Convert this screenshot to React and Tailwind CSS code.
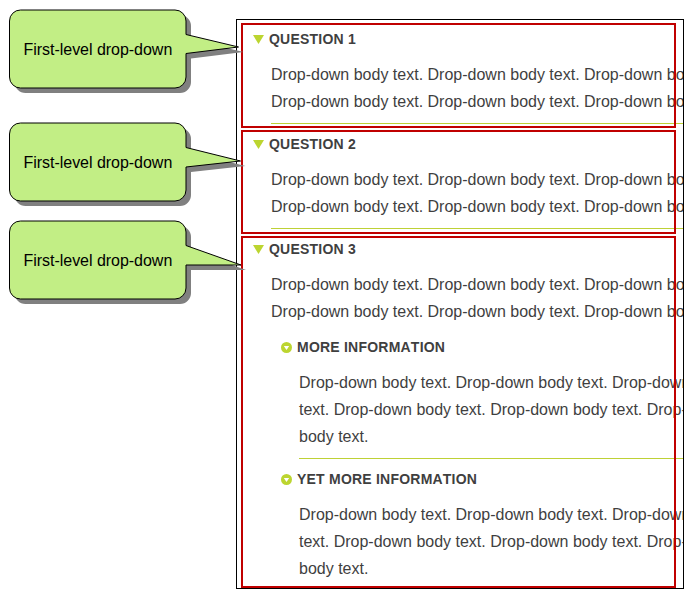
const SENTENCE = "Drop-down body text. ";

function Triangle() {
  return (
    <svg className="mr-[5px] h-[9px] w-[11px] shrink-0" viewBox="0 0 11 9">
      <path d="M0 0H11L5.5 9Z" fill="#bcd530" />
    </svg>
  );
}

function CircleArrow() {
  return (
    <svg className="mr-[5px] size-[11px] shrink-0" viewBox="0 0 11 11">
      <circle cx="5.5" cy="5.5" r="5.5" fill="#bcd530" />
      <path d="M2.8 4H8.2L5.5 8Z" fill="#fff" />
    </svg>
  );
}

function Heading({ icon, children }) {
  return (
    <h3 className="flex h-[22px] items-center text-[14px] font-bold tracking-[0.22px] whitespace-nowrap text-[#3f3f3f] [font-kerning:none]">
      {icon}
      <span>{children}</span>
    </h3>
  );
}

function Body({ lines }) {
  return (
    <div className="mt-[11px] text-[16px] leading-[27px] whitespace-nowrap text-[#3f3f3f]">
      {lines.map((line, i) => (
        <p key={i}>{line}</p>
      ))}
    </div>
  );
}

function Rule() {
  return <div className="mt-2 h-px bg-[#bed136]" />;
}

function Outline() {
  return <div className="pointer-events-none absolute inset-0 border-2 border-[#c00000]" />;
}

const wide = [SENTENCE.repeat(3), SENTENCE.repeat(3)];
const nested = [SENTENCE.repeat(3), "text. " + SENTENCE.repeat(3), "body text."];

function Callout({ path, className }) {
  return (
    <div className={`relative flex h-[78px] w-[176px] items-center ${className}`}>
      <svg className="absolute top-0 left-0 h-[90px] w-[245px] overflow-visible" viewBox="0 0 245 90">
        <path d={path} fill="#808080" transform="translate(5 5)" />
        <path d={path} fill="#c2ee85" stroke="#000" strokeWidth="1" />
      </svg>
      <span className="relative mt-0.5 ml-[14.5px] text-[16px] tracking-[-0.03px] whitespace-nowrap text-black">First-level drop-down</span>
    </div>
  );
}

const bubble = (top, tipX, tipY, bottom) =>
  `M11.5 0H166A11 11 0 0 1 177 11V${top}L${tipX} ${tipY}L177 ${bottom}V67A11 11 0 0 1 166 78H11.5A11 11 0 0 1 .5 67V11A11 11 0 0 1 11.5 0Z`;

export default function App() {
  return (
    <main className="flex h-[589px] w-[684px] overflow-hidden bg-white font-['Liberation_Sans',Arial,sans-serif]">
      <aside className="relative z-10 w-[236px] shrink-0 pt-[10px] pl-[9px]">
        <Callout path={bubble(24.5, 229.5, 37, 43.5)} className="" />
        <Callout path={bubble(24.5, 231.5, 38, 44)} className="mt-[35px]" />
        <Callout path={bubble(24.5, 232, 44, 44)} className="mt-5" />
      </aside>
      <div className="mt-[19px] h-[570px] w-[448px] shrink-0 overflow-hidden border border-black pt-[3px] pl-1">
        <section className="relative h-[105px] w-[435px] pt-[5px] pl-3">
          <Heading icon={<Triangle />}>QUESTION 1</Heading>
          <div className="ml-[18px] w-[420px]">
            <Body lines={wide} />
            <Rule />
          </div>
          <Outline />
        </section>
        <section className="relative mt-0.5 h-[104px] w-[435px] pt-[3px] pl-3">
          <Heading icon={<Triangle />}>QUESTION 2</Heading>
          <div className="ml-[18px] w-[420px]">
            <Body lines={wide} />
            <Rule />
          </div>
          <Outline />
        </section>
        <section className="relative mt-0.5 h-[352px] w-[435px] pt-0.5 pl-3">
          <Heading icon={<Triangle />}>QUESTION 3</Heading>
          <div className="ml-[18px]">
            <Body lines={wide} />
          </div>
          <div className="mt-[11px] ml-7">
            <Heading icon={<CircleArrow />}>MORE INFORMATION</Heading>
            <div className="ml-[18px] w-[400px]">
              <Body lines={nested} />
              <Rule />
            </div>
          </div>
          <div className="mt-[9px] ml-7">
            <Heading icon={<CircleArrow />}>YET MORE INFORMATION</Heading>
            <div className="ml-[18px]">
              <Body lines={nested} />
            </div>
          </div>
          <Outline />
        </section>
      </div>
    </main>
  );
}
